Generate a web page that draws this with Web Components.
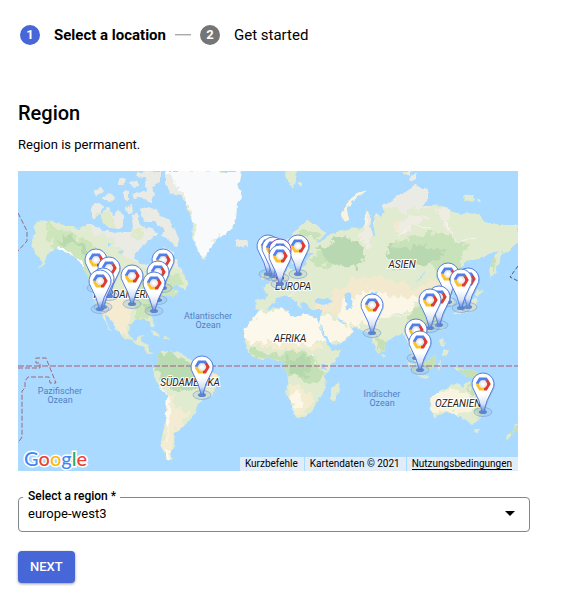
<!DOCTYPE html>
<html lang="en">
<head>
<meta charset="utf-8">
<meta name="viewport" content="width=device-width, initial-scale=1">
<title>Select a location</title>
<style>
  body { margin: 0; background: #fff; color: #000; font-family: Roboto, "Liberation Sans", sans-serif; }
</style>
</head>
<body>
<location-page></location-page>

<template id="map-art">
<svg viewBox="18 171 500 300" role="img" aria-label="World map" xmlns="http://www.w3.org/2000/svg">
  <defs>
    <filter id="coast" x="0" y="0" width="100%" height="100%" color-interpolation-filters="sRGB">
      <feTurbulence type="fractalNoise" baseFrequency="0.16" numOctaves="2" seed="4" result="n"/>
      <feDisplacementMap in="SourceGraphic" in2="n" scale="5" xChannelSelector="R" yChannelSelector="G"/>
    </filter>
    <filter id="terrain" x="0" y="0" width="100%" height="100%" color-interpolation-filters="sRGB">
      <feTurbulence type="fractalNoise" baseFrequency="0.12" numOctaves="3" seed="9" result="n"/>
      <feDisplacementMap in="SourceGraphic" in2="n" scale="14" xChannelSelector="R" yChannelSelector="G"/>
    </filter>
    <clipPath id="land">
      <path id="na" d="M32 240 36 232 33 226 38 222 47 220 56 223 68 226 79 229 88 224 96 227 106 231 115 233 124 232 131 232 133 227 132 215 136 212 139 220 142 228 147 230 152 227 156 235 148 240 142 246 136 253 135 259 141 264 150 266 154 271 157 277 160 275 159 268 163 262 161 252 163 246 169 249 175 258 183 273 189 284 184 289 176 285 171 288 179 292 174 297 166 296 160 300 157 308 152 313 151 318 154 327 152 328 148 320 141 319 135 321 130 325 129 334 133 341 138 337 143 335 141 341 144 343 149 345 149 351 154 354 152 355 143 348 135 343 125 339 118 331 112 322 108 317 104 313 106 321 112 331 109 329 104 319 98 306 93 297 91 286 89 278 84 270 80 262 75 258 65 252 56 248 48 254 44 263 37 271 42 262 36 254 33 247Z"/>
      <path id="sa" d="M158 355 163 350 170 352 180 353 188 358 196 363 206 370 216 373 219 377 217 385 212 395 204 399 198 403 195 413 187 423 181 429 175 433 174 447 170 453 173 460 167 459 162 448 161 440 164 428 166 412 167 395 159 387 154 376 154 369 157 363Z"/>
      <path id="gl" d="M166 171 178 171H241L238 187 242 197 237 203 236 220 233 228 218 239 209 249 205 259 197 250 192 238 193 223 188 210 182 195 170 193 166 182Z"/>
      <path id="eu" d="M256 309 255 300 265 299 268 294 262 288 268 284 274 280 279 275 285 272 288 266 290 270 298 269 305 265 308 258 313 253 303 253 302 246 307 240 303 240 299 246 299 254 295 263 291 263 289 257 283 259 279 253 283 246 289 239 294 231 301 225 308 221 316 224 325 232 322 238 316 239 319 243 325 240 330 234 338 232 347 230 352 227 363 229 365 215 368 211 371 217 370 230 373 237 375 234 373 224 376 213 381 218 385 212 382 206 388 203 400 195 410 189 415 185 428 191 428 200 422 206 432 206 440 205 450 211 460 214 470 213 480 216 485 221 500 225 518 225V243L510 250 502 253 501 259 496 271 491 278 489 270 492 260 499 250 490 253 483 258 475 260 465 262 461 268 470 276 467 287 458 291 451 293 454 302 450 306 446 296 441 293 437 296 441 304 443 315 438 325 430 331 423 333 421 336 426 344 424 351 418 354 415 347 412 349 415 360 418 366 413 362 410 350 407 341 402 333 395 336 386 343 383 351 378 355 373 341 370 334 361 330 353 328 354 331 346 340 333 346 326 336 319 324 321 315 323 310 312 310 306 303 300 301 303 309 298 306 290 296 284 297 276 299 270 306 263 311Z"/>
      <path id="af" d="M244 338 244 330 252 320 258 312 266 309 280 308 287 310 290 316 300 317 305 314 317 318 320 328 325 340 332 350 341 350 338 357 330 367 325 375 326 388 318 400 313 411 305 417 296 418 291 404 286 392 288 380 287 372 283 362 273 358 262 359 253 356 245 348Z"/>
      <path id="au" d="M430 398 440 391 450 386 457 382 463 388 465 383 470 382 473 391 480 399 484 405 483 413 479 421 472 425 463 419 457 414 446 413 434 418 431 410Z"/>
      <path d="M100 216 107 208 114 215 118 211 123 216 123 226 113 229 103 223ZM92 206 99 203 103 206 100 215 93 219 91 212ZM94 192 102 186 104 191 96 196ZM103 197 110 193 115 199 107 202ZM123 192 129 191 129 199 125 200ZM132 194 142 191 152 193 153 202 147 202 143 197 134 199ZM120 180 126 178 124 185 119 185ZM126 207 132 205 133 213 127 214ZM136 172 160 171 160 181 152 187 154 195 148 192 145 186 146 178 137 177ZM130 182 136 180 139 186 132 187ZM140 210 150 207 158 212 166 218 171 222 179 238 177 248 170 240 162 236 165 230 155 222 147 222 141 216ZM136 237 142 235 147 240 140 242Z"/>
      <path d="M235 240 241 239 247 240 248 245 241 248 236 245ZM284 171H297L296 182 292 190 287 178ZM298 182 302 182 302 186 298 185ZM365 190 356 194 349 201 342 214 343 221 349 219 347 211 352 201 361 195ZM402 171H412L409 176ZM409 177 416 173 416 180 411 181ZM463 196 474 195 475 200 465 201ZM477 199 481 200 480 202 476 201Z"/>
      <path d="M262 274 267 272 269 276 265 279 261 278ZM269 266 274 262 275 269 280 277 278 281 270 281 272 275 269 271ZM453 314 460 308 469 307 472 300 476 296 478 303 474 310 467 312 458 315ZM476 290 483 291 479 296 475 294ZM442 325 444 328 441 332ZM439 340 443 338 444 347 441 346ZM443 350 448 350 446 357 442 355ZM405 359 411 363 419 371 416 373ZM424 362 430 360 434 355 436 361 433 369 427 371 424 367ZM438 363 442 361 440 369 437 372ZM418 374 429 376 428 378 417 376ZM455 367 463 369 473 370 482 375 487 381 480 380 473 377 466 377 462 372 455 370ZM475 429 479 429 478 433 474 432ZM515 423 519 425 518 432 514 432 510 438 506 440 507 435 514 430ZM331 388 338 384 339 389 334 402 331 402ZM150 331 158 333 160 337 152 334ZM164 337 170 338 168 339 163 339ZM382 353 385 356 383 359Z"/>
    </clipPath>
  </defs>
  <rect x="18" y="171" width="500" height="300" fill="#aadaff"/>
  <g filter="url(#coast)">
    <g clip-path="url(#land)">
      <rect x="18" y="171" width="500" height="300" fill="#e0ebcf"/>
      <g filter="url(#terrain)">
        <path fill="#ebebe5" d="M80 171H182V232L188 275 172 265 160 240 150 270 133 262 110 238 92 230 80 228ZM378 171H430V207L405 213 390 207 375 215ZM232 234H252V252H232Z"/>
        <path fill="#dfeacb" d="M98 214H114V229H100ZM137 228 146 232 141 240 130 234Z"/>
        <path fill="#cde5bb" d="M48 222 70 232 92 244 95 263 112 268 113 282 95 284 84 270 70 250 55 247 46 236ZM118 274 142 280 158 280 176 284 175 296 156 305 150 318 137 318 134 300 142 292ZM160 276 178 274 187 285 170 286Z"/>
        <path fill="#f4ebd0" d="M100 292 122 295 130 310 126 322 132 340 117 332 104 315Z"/>
        <path fill="#b8d9ae" d="M96 284 104 288 102 301 97 302ZM144 304 157 303 153 310 145 311ZM56 244 65 234 80 240 92 254 87 258 75 245Z"/>
        <path fill="#fbfcfd" d="M50 249 64 248 77 258 84 271 80 272 68 256Z"/>
        <path fill="#b9dcb2" d="M156 358 166 353 182 358 194 365 204 371 202 380 190 390 174 389 162 378 156 368Z"/>
        <path fill="#f3ecd2" d="M206 372 221 372 212 382 199 384ZM163 394 172 396 177 413 174 431 170 459 163 445 166 420ZM177 410 191 412 179 431 174 427Z"/>
        <path fill="#fcf9ef" d="M161 388 170 400 171 424 166 427 164 402ZM162 447 170 452 171 461 165 458Z"/>
        <path fill="#f8fafc" d="M164 169H245V200L236 226 216 241 206 262 196 247 193 220 185 199Z"/>
        <path fill="#c8e2ba" d="M283 256 291 240 303 230 318 230 324 238 306 238 301 246 294 262ZM308 258 335 250 344 266 315 267ZM385 248 415 236 446 232 467 245 459 264 470 282 455 289 437 278 431 262 400 265Z"/>
        <path fill="#b7d8b1" d="M318 250 330 243 345 236 358 244 365 257 358 269 341 265 330 263ZM388 240 400 249 420 244 445 252 433 265 412 266 397 271 389 256Z"/>
        <path fill="#f3e9cf" d="M332 291 350 280 371 276 395 280 415 288 430 282 443 280 440 293 405 304 382 296 368 305 345 312 328 307ZM315 300 340 307 337 315 315 309ZM396 222 408 220 404 233 392 231Z"/>
        <path fill="#fbf6e6" d="M345 299 372 290 404 298 420 298 413 310 390 314 374 325 355 326 337 317ZM318 314 340 318 355 331 346 342 331 343 319 325Z"/>
        <path fill="#efece4" d="M365 212H376L369 247 360 240ZM432 205 451 212 446 231 439 214ZM402 219 427 214 416 226 398 232Z"/>
        <path fill="#c6e0b6" d="M411 310 424 305 439 307 443 318 431 330 417 336 406 331ZM374 334 386 341 381 354ZM414 338 422 347 418 356ZM424 355H438V372H424ZM404 358 422 374 412 374ZM455 367 488 374 486 384 460 377Z"/>
        <path fill="#fcf8ec" d="M243 329 258 311 290 311 320 317 326 340 307 343 275 342 243 342Z"/>
        <path fill="#f4eccf" d="M241 340 258 343 290 342 323 344 325 349 280 349 248 345ZM287 385 299 383 313 400 305 414 292 414Z"/>
        <path fill="#c4e0b5" d="M247 348 263 351 283 354 300 352 319 360 324 371 321 383 304 384 294 375 287 373 281 359 254 358Z"/>
        <path fill="#b5d8ae" d="M287 360 308 356 312 369 303 378 290 371Z"/>
        <path fill="#fcf7e7" d="M288 395 299 391 302 408 295 412Z"/>
        <path fill="#f9f4df" d="M429 397 453 388 468 396 474 411 460 413 439 411 431 413ZM335 173H366V225H335Z"/>
        <path fill="#c5e0b9" d="M470 383 478 397 485 406 480 421 476 411 474 399ZM489 257 496 259 493 275ZM505 438 517 425 518 436Z"/>
      </g>
      <g fill="#aadaff">
        <path d="M315 303 318 297 323 299 327 297 333 303 325 305ZM343 295 348 292 352 294 351 299 353 309 347 309 346 300ZM131 281 138 279 142 283 136 284ZM142 287 149 289 146 292ZM318 327 321 330 332 346 329 347ZM337 316 345 323 341 324ZM416 282 424 272 425 273 418 281ZM321 365H326V369H321ZM108 243 113 245 108 247ZM118 252 125 250 121 254ZM370 293 378 292 376 295Z"/>
      </g>
      <g fill="none" stroke="#fbfaf3" stroke-width="1" opacity=".7">
        <path d="M96 258 103 274 110 284 112 299M160 385 168 396 168 442M380 310 395 317 411 314M398 236 412 225 430 229M445 220 455 242 475 238M312 354 317 367M288 296 296 292"/>
      </g>
    </g>
  </g>
  <g fill="none" stroke="#9b6a7b" stroke-width="1">
    <path d="M18 213 27 231V241L18 251M18 368H40V363H36V358H46L56 383H50L49 377H28L25 381V388L22 391V437L18 443" stroke-dasharray="5 2"/>
    <path d="M518 266 510 277 518 281" stroke="#555f70" stroke-dasharray="4 2"/>
    <path d="M18 366H518" stroke="#a8718a" stroke-opacity=".6" stroke-width="2" stroke-dasharray="6 2"/>
  </g>
  <g class="ocean">
    <text x="208" y="319">Atlantischer</text><text x="208" y="328">Ozean</text>
    <text x="60" y="394">Pazifischer</text><text x="60" y="403">Ozean</text>
    <text x="382" y="397">Indischer</text><text x="382" y="406">Ozean</text>
  </g>
  <g class="continent">
    <text x="127" y="298">NORDAMERIKA</text>
    <text x="293" y="290">EUROPA</text>
    <text x="402" y="268">ASIEN</text>
    <text x="290" y="342">AFRIKA</text>
    <text x="190" y="386">SÜDAMERIKA</text>
    <text x="458" y="407">OZEANIEN</text>
  </g>
</svg>
</template>

<script>
class BaseElement extends HTMLElement {
  render(markup) { this.attachShadow({ mode: "open" }).innerHTML = markup; }
}

customElements.define("step-item", class extends BaseElement {
  connectedCallback() {
    this.render(`<style>
      :host { display: flex; align-items: center; gap: 14px; font-size: 15px; line-height: 20px; --badge: #757575; }
      :host([active]) { font-weight: 700; --badge: #4766d8; }
      b { width: 20px; height: 20px; border-radius: 50%; background: var(--badge); color: #fff;
          font-size: 13px; line-height: 20px; text-align: center; font-weight: 700; }
    </style><b>${this.getAttribute("number")}</b><span><slot></slot></span>`);
  }
});

customElements.define("step-list", class extends BaseElement {
  connectedCallback() {
    this.render(`<style>
      :host { display: flex; align-items: center; gap: 9px; padding: 0 2px; }
      i { width: 16px; height: 1px; background: #aaa; border-bottom: 1px solid #ddd; }
    </style><slot name="first"></slot><i></i><slot name="second"></slot>`);
  }
});

customElements.define("map-pin", class extends BaseElement {
  connectedCallback() {
    const selected = this.hasAttribute("selected");
    const edge = selected ? "#8f3fc0" : "#557fe0";
    this.style.left = (this.getAttribute("x") - 18) / 5 + "%";
    this.style.top = (this.getAttribute("y") - 171) / 3 + "%";
    this.render(`<style>
      :host { position: absolute; width: 0; height: 0; }
      svg { position: absolute; left: -14px; top: -14px; display: block; }
    </style>
    <svg width="28" height="48" viewBox="-14 -14 28 48" fill="none" aria-hidden="true">
      <defs>
        <linearGradient id="g" x1="0" y1="0" x2="0" y2="1"><stop offset=".55" stop-color="#fff"/><stop offset=".8" stop-color="#d5e1f7"/><stop offset="1" stop-color="#5d86d4"/></linearGradient>
        <radialGradient id="s"><stop offset=".3" stop-color="#fff"/><stop offset="1" stop-color="#dedede"/></radialGradient>
      </defs>
      <ellipse cy="28" rx="9" ry="4.500" fill="#8ba9d9" fill-opacity=".2" stroke="#7f9fcf" stroke-opacity=".6"/>
      <ellipse cy="28" rx="4" ry="2" fill="${selected ? "#73309f" : "#5f86c9"}"/>
      <path d="M-1 27Q-3 17-9 6.300A11 11 0 1 1 9 6.300Q3 17 1 27Z" fill="#395c9e" fill-opacity=".2" transform="translate(1 1)"/>
      <path d="M-1 27Q-3 17-9 6.300A11 11 0 1 1 9 6.300Q3 17 1 27Q0 29-1 27Z" fill="url(#g)" stroke="${edge}"/>
      <path d="M-6 0-3-5H3L4-3.500" stroke="#5180ea" stroke-width="3"/>
      <path d="M-6 0-3 5H1" stroke="#fac32c" stroke-width="3"/>
      <path d="M3.800-3.800 6 0 3 5H1" stroke="#dc3d32" stroke-width="3"/>
      <circle r="3.800" fill="url(#s)"/>
    </svg>`);
  }
});

customElements.define("region-map", class extends BaseElement {
  connectedCallback() {
    const pins = [[163,260],[158,272],[154,283],[96,260],[109,268],[103,279],[100,281],[132,276],
      [268,246],[273,248],[298,246],[280,250,"selected"],[280,256],[202,367],[372,305],
      [448,274],[468,279],[461,280],[439,297],[430,300],[416,330],[420,342],[483,384]];
    this.render(`<style>
      :host { display: block; position: relative; overflow: hidden; aspect-ratio: 5 / 3; background: #aadaff; }
      .art > svg { display: block; width: 100%; height: 100%; }
      .art { position: absolute; inset: 0; }
      text { text-anchor: middle; paint-order: stroke; }
      .ocean { font-size: 9px; fill: #527fc4; }
      .continent { font-size: 10px; font-style: italic; fill: #222; stroke: #fff; stroke-width: 2px; }
      .logo { position: absolute; left: 6px; bottom: 0; font: 500 20px/26px Lato, Roboto, sans-serif;
              color: #4285f4; -webkit-text-stroke: 3px #fff; paint-order: stroke fill; text-decoration: none; }
      .r { color: #ea4335; } .y { color: #fbbc05; } .g { color: #34a853; }
      footer { position: absolute; right: 0; bottom: 0; display: flex; gap: 1px; font-size: 10px; line-height: 14px; }
      footer > * { background: #e0ecf8; padding: 0 6px 0 5px; }
      button { border: 0; margin: 0; font: inherit; color: #000; cursor: pointer; }
      footer a { color: #000; text-decoration: none; }
      footer a span { display: block; height: 12px; line-height: 14px; border-bottom: 1px solid #000; }
    </style>
    <div class="art"></div>
    ${pins.map(([x, y, s]) => `<map-pin x="${x}" y="${y}" ${s || ""}></map-pin>`).join("")}
    <a class="logo" href="#maps" aria-label="Google">G<span class="r">o</span><span class="y">o</span>g<span class="g">l</span><span class="r">e</span></a>
    <footer><button type="button">Kurzbefehle</button><span>Kartendaten © 2021</span><a href="#terms"><span>Nutzungsbedingungen</span></a></footer>`);
    this.shadowRoot.querySelector(".art").append(document.getElementById("map-art").content.cloneNode(true));
  }
});

customElements.define("region-select", class extends BaseElement {
  connectedCallback() {
    this.render(`<style>
      :host { display: block; position: relative; }
      label { position: absolute; left: 5px; top: -8px; padding: 0 4px 0 5px; background: #fff; font-size: 12px; line-height: 14px; font-weight: 500; }
      select { appearance: none; display: block; box-sizing: border-box; width: 100%; height: 35px; margin: 0; padding: 0 32px 2px 9px;
               border: 1px solid #80868b; border-radius: 4px; background: #fff; color: #000; font: 13px/20px Roboto, sans-serif; }
      svg { position: absolute; right: 15px; top: 14px; pointer-events: none; }
    </style>
    <select id="region"><option>europe-west3</option></select>
    <label for="region">Select a region *</label>
    <svg width="10" height="6" aria-hidden="true"><path d="M0 0H10L5 5Z"/></svg>`);
  }
});

customElements.define("primary-button", class extends BaseElement {
  connectedCallback() {
    this.render(`<style>
      :host { display: block; }
      button { height: 32px; padding: 0 12px; border: 0; border-radius: 4px; background: #4766d8; color: #fff;
               font: 500 13px/32px Roboto, sans-serif; box-shadow: 0 1px 3px rgba(0,0,0,.4); cursor: pointer; }
    </style><button type="button"><slot></slot></button>`);
  }
});

customElements.define("location-page", class extends BaseElement {
  connectedCallback() {
    this.render(`<style>
      :host { display: block; padding: 25px 54px 24px 18px; }
      h1 { margin: 56px 0 0; font-size: 20px; line-height: 24px; font-weight: 500; }
      p { margin: 10px 0 0; font-size: 13px; line-height: 20px; }
      region-map { margin: 16px 12px 0 0; }
      region-select { margin-top: 26px; }
      primary-button { margin-top: 19px; }
    </style>
    <step-list><step-item slot="first" number="1" active>Select a location</step-item><step-item slot="second" number="2">Get started</step-item></step-list>
    <h1>Region</h1>
    <p>Region is permanent.</p>
    <region-map></region-map>
    <region-select></region-select>
    <primary-button>NEXT</primary-button>`);
  }
});
</script>
</body>
</html>
